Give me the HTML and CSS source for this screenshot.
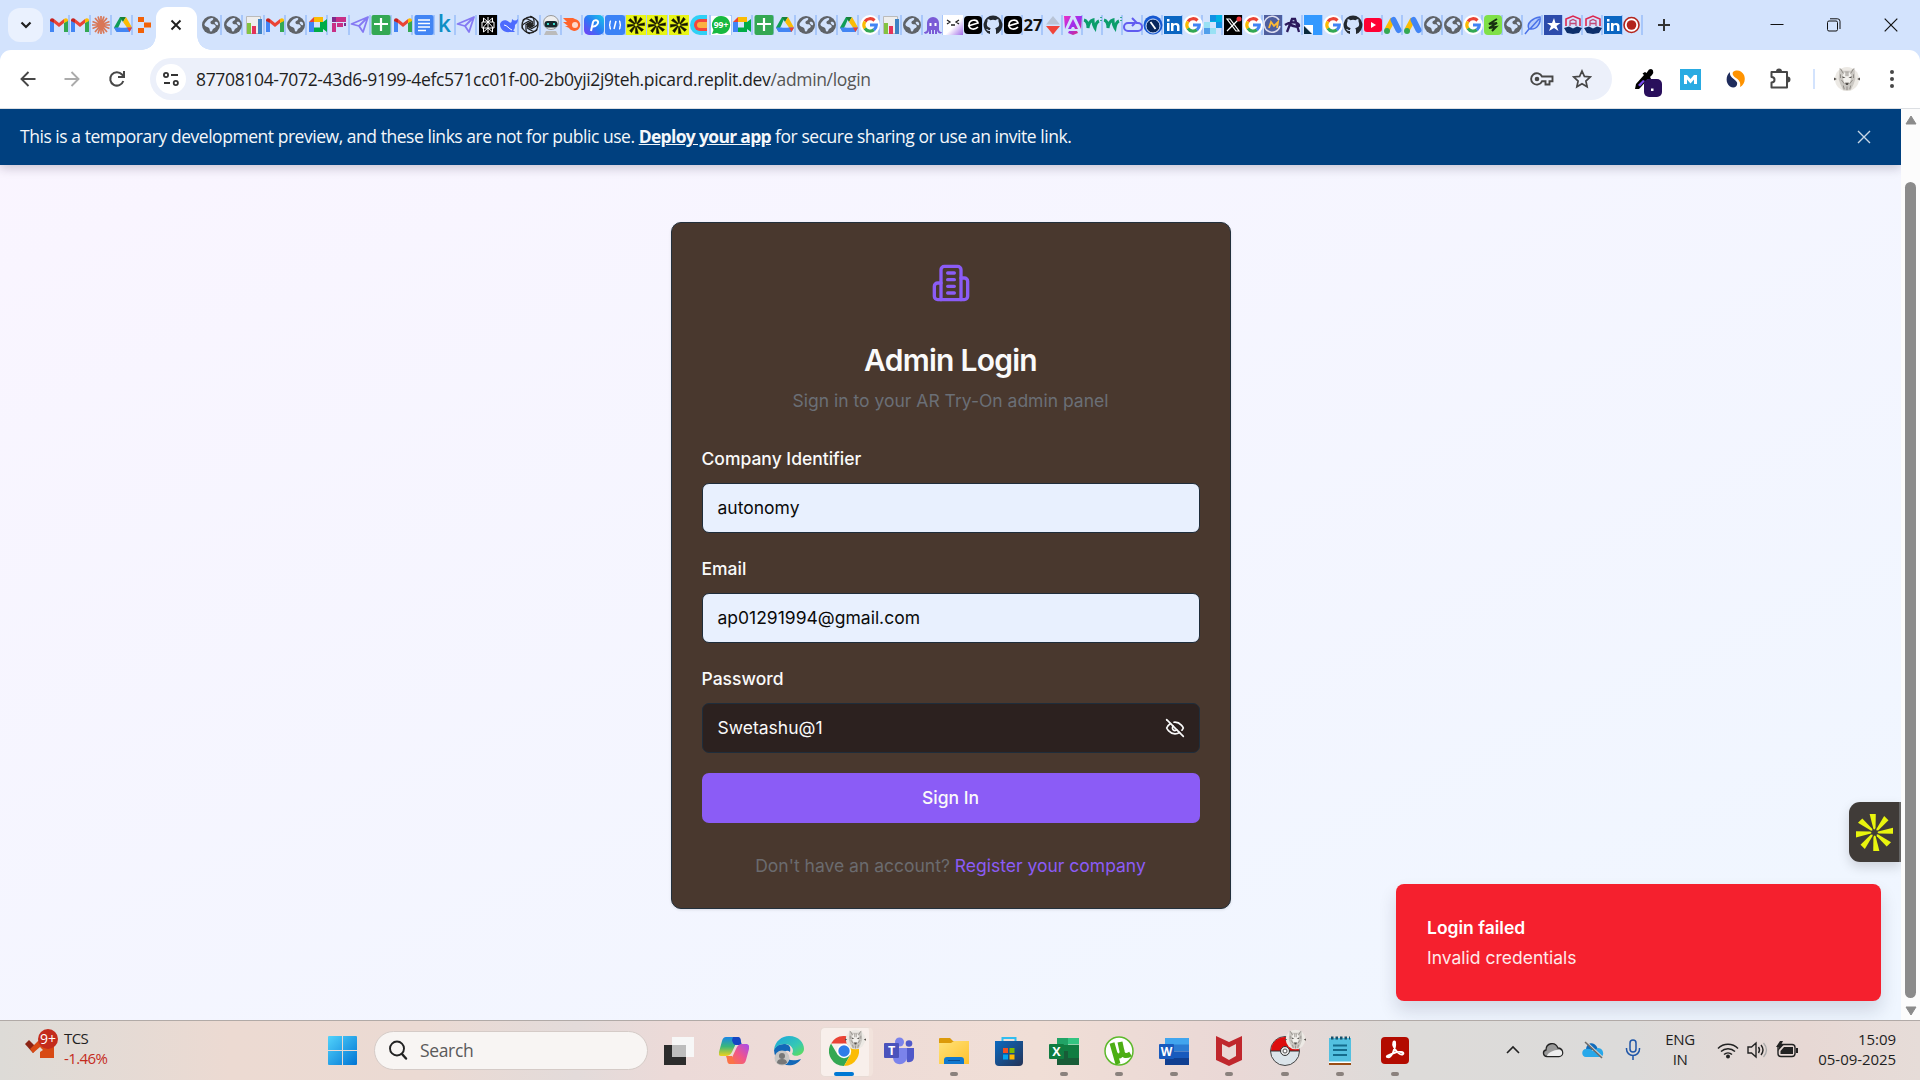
FILE: index.html
```html
<!DOCTYPE html>
<html lang="en">
<head>
<meta charset="utf-8">
<title>Admin Login</title>
<link rel="stylesheet" href="styles.css">
</head>
<body>
<svg class="defs" aria-hidden="true">
  <defs>
    <linearGradient id="gWin" x1="0" y1="0" x2="1" y2="1"><stop offset="0" stop-color="#52d3fb"/><stop offset="1" stop-color="#0074d4"/></linearGradient>
    <linearGradient id="gCopA" x1="0" y1="0" x2="0" y2="1"><stop offset="0" stop-color="#1a86e8"/><stop offset=".5" stop-color="#3bb77a"/><stop offset="1" stop-color="#f0d21c"/></linearGradient>
    <linearGradient id="gCopB" x1="0" y1="1" x2="1" y2="0"><stop offset="0" stop-color="#fb7a3c"/><stop offset=".5" stop-color="#f0568c"/><stop offset="1" stop-color="#a44bf0"/></linearGradient>
    <linearGradient id="gEdge" x1="0" y1="0" x2="1" y2="1"><stop offset="0" stop-color="#1aa5e0"/><stop offset=".6" stop-color="#35c8b4"/><stop offset="1" stop-color="#66e04b"/></linearGradient>
    <linearGradient id="gFold" x1="0" y1="0" x2="1" y2="1"><stop offset="0" stop-color="#ffe27a"/><stop offset="1" stop-color="#ffc22c"/></linearGradient>
    <linearGradient id="gStore" x1="0" y1="0" x2="1" y2="1"><stop offset="0" stop-color="#0b69c0"/><stop offset="1" stop-color="#253356"/></linearGradient>
    <linearGradient id="gP" x1="0" y1="1" x2="1" y2="0"><stop offset="0" stop-color="#7a3cf5"/><stop offset=".5" stop-color="#2a7bf5"/><stop offset="1" stop-color="#18c9e8"/></linearGradient>
    <linearGradient id="gNg" x1="0" y1="0" x2="1" y2="1"><stop offset="0" stop-color="#f02ec0"/><stop offset=".5" stop-color="#9b2ff0"/><stop offset="1" stop-color="#f5285a"/></linearGradient>
    <linearGradient id="gCat" x1="0" y1="0" x2="1" y2="1"><stop offset=".55" stop-color="#fff"/><stop offset="1" stop-color="#a06be8"/></linearGradient>
    <path id="blade" d="M15 1h6.300l-.2 14.500-1 1.500-1.200-.7z"/>
    <g id="burst"><use href="#blade"/><use href="#blade" transform="rotate(45 20 20)"/><use href="#blade" transform="rotate(90 20 20)"/><use href="#blade" transform="rotate(135 20 20)"/><use href="#blade" transform="rotate(180 20 20)"/><use href="#blade" transform="rotate(225 20 20)"/><use href="#blade" transform="rotate(270 20 20)"/><use href="#blade" transform="rotate(315 20 20)"/></g>
    <symbol id="gmail" viewBox="0 0 20 20"><path fill="#4285f4" d="M1 17V5l4 3v9z"/><path fill="#34a853" d="M15 17V8l4-3v12z"/><path fill="#ea4335" d="M5 8V4l5 4 5-4v4l-5 4z"/><path fill="#c5221f" d="M1 5.500C1 3 3.500 2.500 5 4v4L1 6z"/><path fill="#fbbc04" d="M19 5.500C19 3 16.500 2.500 15 4v4l4-2z"/></symbol>
    <symbol id="claude" viewBox="0 0 20 20"><path stroke="#d97757" stroke-width="1.700" d="M10 1v18M1 10h18M4 3l12 14M16 3L4 17M7 1.500l6 17M13 1.500l-6 17M1.500 6.500l17 7M1.500 13.500l17-7"/></symbol>
    <symbol id="drive" viewBox="0 0 20 20"><path fill="#0f9d58" d="M7 2h3l-6.500 14.500L1 12.500z"/><path fill="#188038" d="M7 2h6l-3 5z"/><path fill="#fbbc04" d="M13 2l6 10.500h-5L10 7z"/><path fill="#4285f4" d="M1 12.500h18L16.500 17h-13z"/><path fill="#ea4335" d="M14 12.500h5L16.500 17z"/><path fill="#d3e3fd" d="M10 7.500l3 5H7z"/></symbol>
    <symbol id="replit" viewBox="0 0 20 20"><path fill="#f26207" d="M4 2h6v5H4zM10 7.500h7v5h-7zM4 13h6v5H4z"/></symbol>
    <symbol id="globe" viewBox="0 0 20 20"><circle cx="10" cy="10" r="9" fill="#5f6368"/><path fill="#d3e3fd" d="M10.500 3c2.500-.3 2 1.200 1 2.200S9 6 9.500 8s4 .5 5 2.500-1.500 2.500-2.500 3.500-.5 2.500-2 2.500-1-2.500-2-3.500-4-1.500-4.500-3S7 3.500 10.500 3zM14 7c1-.5 2.500 0 3 1.200s0 2.300-1 2-3-2.500-2-3.200z"/></symbol>
    <symbol id="bars" viewBox="0 0 20 20"><path fill="#eee" stroke="#bbb" d="M2.500 1.500h14v17h-14z"/><path fill="#83c341" d="M3 8h4v11H3z"/><path fill="#e4335a" d="M8 11h4v8H8z"/><path fill="#3d82c4" d="M14 4h4v15h-4z"/></symbol>
    <symbol id="meet" viewBox="0 0 20 20"><path fill="#fbbc04" d="M6 2h9v5H6z"/><path fill="#ea4335" d="M1 7l5-5v5z"/><path fill="#4285f4" d="M1 7h5v10H1z"/><path fill="#00ac47" d="M6 12.500h6V7h3l4-3v13l-4-3v3H6z"/></symbol>
    <symbol id="figF" viewBox="0 0 20 20"><path fill="#c82f86" d="M3 2h14v5H3zM3 8h4v9H3zM8 8h6v4H8z"/><path fill="#7d2a8c" d="M3 2h4v5H3zM15 8h2v3h-2z"/></symbol>
    <symbol id="send" viewBox="0 0 20 20"><path fill="none" stroke="#8579f3" stroke-width="1.800" stroke-linejoin="round" d="M1.500 9L18 2l-5 15-4-6zM9 11l8-8"/></symbol>
    <symbol id="sheets" viewBox="0 0 20 20"><rect width="19" height="20" x=".5" rx="2" fill="#34a853"/><path stroke="#fff" stroke-width="2.200" d="M10 3v13M3 9h14"/></symbol>
    <symbol id="docs" viewBox="0 0 20 20"><rect width="19" height="20" x=".5" rx="2" fill="#4285f4"/><path stroke="#fff" stroke-width="1.700" d="M4 5h12M4 8.500h12M4 12h12M4 15.500h8"/></symbol>
    <symbol id="perp" viewBox="0 0 20 20"><path d="M1 0h18v20H1z"/><path fill="none" stroke="#fff" d="M10 2v16M4 7h12v6H4zM5.500 3L10 7l4.500-4v4M5.500 7V3M5.500 17v-5L10 7l4.500 5v5L10 13z"/></symbol>
    <symbol id="whale" viewBox="0 0 20 20"><path fill="#4d6bfe" d="M1 9c1-4 6-5 9-2 2 2 3 0 3-3 2 2 4 2 6 0 0 4-2 5-3 6 0 4-1 5-2 5l2 2-5 0C5 18 1 14 1 9z"/><path stroke="#fff" fill="none" d="M5 10c3 0 5 4 8 5"/></symbol>
    <symbol id="openai" viewBox="0 0 20 20"><g fill="none" stroke="#222" stroke-width="1.300"><path id="petal" d="M10 1.500a4 4 0 0 1 4 4v4.800l-4 2.300V7.500"/><use href="#petal" transform="rotate(60 10 10)"/><use href="#petal" transform="rotate(120 10 10)"/><use href="#petal" transform="rotate(180 10 10)"/><use href="#petal" transform="rotate(240 10 10)"/><use href="#petal" transform="rotate(300 10 10)"/><circle cx="10" cy="10" r="8"/></g></symbol>
    <symbol id="robot" viewBox="0 0 20 20"><ellipse cx="10" cy="7.500" rx="7.500" ry="7" fill="#eee" stroke="#999"/><rect x="3.500" y="6" width="13" height="6.500" rx="3" fill="#17282c"/><path fill="#39d8c8" d="M6 8h2v2H6zM12 8h2v2h-2z"/><path fill="#bbb" d="M5 16h10l2 4H3z"/></symbol>
    <symbol id="semrush" viewBox="0 0 20 20"><path fill="#ff642d" d="M1 3h10l2 1a6 6 0 1 1-6 9l-4-2 3 0-5-4h4z"/><circle cx="13" cy="10" r="3" fill="#ffd9cc"/></symbol>
    <symbol id="pp" viewBox="0 0 20 20"><rect width="20" height="20" rx="5" fill="url(#gP)"/><path fill="none" stroke="#fff" stroke-width="2" d="M7 16l2-9c1-3 6-2 5 1s-4 4-6 3"/></symbol>
    <symbol id="code" viewBox="0 0 20 20"><rect width="20" height="20" rx="3" fill="#3b82f6"/><path fill="none" stroke="#fff" stroke-width="1.500" d="M6 6c-2 0 0 4-2 4 2 0 0 4 2 4M14 6c2 0 0 4 2 4-2 0 0 4-2 4M11 6l-2 8"/></symbol>
    <symbol id="rays" viewBox="0 0 40 40"><use href="#burst"/></symbol>
    <symbol id="yray" viewBox="0 0 20 20"><path fill="#e8f516" d="M0 0h20v20H0z"/><g transform="translate(1 1) scale(.45)" fill="#151500" stroke="#151500"><use href="#burst"/></g></symbol>
    <symbol id="cc" viewBox="0 0 20 20"><path fill="#2fd0f5" d="M10 0h7v20h-7A10 10 0 0 1 10 0z"/><path fill="#f4453c" d="M10 4h7v12h-7a6 6 0 0 1 0-12z"/><path fill="#fbb040" d="M10 7h7v6h-7a3 3 0 0 1 0-6z"/></symbol>
    <symbol id="wa" viewBox="0 0 20 20"><path fill="#fff" d="M0 1h20v19H0z"/><path fill="#17b93f" d="M10 1a9 9 0 1 1-4 17l-5 1 1.500-4A9 9 0 0 1 10 1z"/><text x="10" y="13" font-size="8.500" font-weight="700" text-anchor="middle" fill="#fff">99+</text></symbol>
    <symbol id="google" viewBox="0 0 20 20"><circle cx="10" cy="10" r="10" fill="#fff"/><g fill="none" stroke-width="3.200"><path stroke="#ea4335" d="M5 6.500A6.200 6.200 0 0 1 14.500 5.500"/><path stroke="#fbbc04" d="M4.900 13.500a6.500 6.500 0 0 1 0-7"/><path stroke="#34a853" d="M4.900 13.300a6.200 6.200 0 0 0 9 1.500"/><path stroke="#4285f4" d="M10 10h6.300q0 3-2.500 5"/></g></symbol>
    <symbol id="octo" viewBox="0 0 20 20"><path fill="#7a5bd6" d="M4 8a6 6 0 0 1 12 0v6c0 3 2 3 3 3-1 3-5 1-5-2v4h-2v-4h-1v4H9v-4H8v4H6v-4c0 4-5 5-5 2 1 0 3 0 3-3z"/><path fill="#fff" d="M6.500 8h2v3h-2zM11.500 8h2v3h-2z"/></symbol>
    <symbol id="cat" viewBox="0 0 20 20"><path fill="url(#gCat)" d="M0 0h20v20H0z"/><path fill="none" stroke="#222" stroke-width="1.300" d="M4 5l3 2-3 2M16 5l-3 2 3 2M8 10h4"/></symbol>
    <symbol id="ee" viewBox="0 0 20 20"><rect x="1" y="1" width="18" height="18" rx="4"/><path fill="none" stroke="#fff" stroke-width="1.700" d="M5 11l10-3c-1-4-9-4-9 2 0 5 6 5 9 2"/></symbol>
    <symbol id="github" viewBox="0 0 20 20"><path fill="#24292f" d="M10 .5a9.500 9.500 0 0 0-3 18.500v-3c-3 .5-3-1.500-4-2 2-.5 2 1.500 4 1 0-1 .4-1.500.8-1.800C4 12.500 3 10 4.500 6.500c0-1 0-2 .3-2.500 1 0 2 .8 2.500 1.200q2.700-.7 5.400 0C13.200 4.800 14.200 4 15.200 4c.3.500.3 1.500.3 2.500C17 10 16 12.500 12.200 13.200c.6.600.8 1.300.8 2.300V19A9.500 9.500 0 0 0 10 .5z"/></symbol>
    <symbol id="n27" viewBox="0 0 20 20"><text x="10" y="15.500" font-size="16" font-weight="700" textLength="19" lengthAdjust="spacingAndGlyphs" text-anchor="middle" fill="#111">27</text></symbol>
    <symbol id="diam" viewBox="0 0 20 20"><path fill="#b9c4d6" d="M10 1l7 8.500H3z"/><path fill="#f0443a" d="M3 11h14l-7 8.500z"/></symbol>
    <symbol id="angular" viewBox="0 0 20 20"><path fill="url(#gNg)" d="M1 1h7L2 14zM12 1h7l-1 13zM10 4l5 10h-3l-1-2H9l-1 2H5zM6 16h8l1 2-5 2-5-2z"/></symbol>
    <symbol id="ww" viewBox="0 0 20 20"><path fill="none" stroke="#0c9d6c" stroke-width="3" d="M1 5q4 1 4 8 1-7 5-8 0 5 2 8 1-6 4-7"/><path stroke="#0c9d6c" stroke-width="1.500" d="M18 2v1M18 5v1"/></symbol>
    <symbol id="loop" viewBox="0 0 20 20"><path fill="none" stroke="#615cf0" stroke-width="2" d="M13 8h2a4 4 0 0 1 0 8H5a4 4 0 0 1 0-8h7M9 3l4 4-4 4"/></symbol>
    <symbol id="nn" viewBox="0 0 20 20"><circle cx="10" cy="10" r="9.500" fill="#1658d1"/><circle cx="10" cy="11" r="7" fill="#08275d" stroke="#d3e3fd"/><path stroke="#fff" stroke-width="1.800" d="M7.500 7l5 7"/></symbol>
    <symbol id="linkedin" viewBox="0 0 20 20"><path fill="#0a66c2" d="M1 1h18v18H1z"/><path fill="#fff" d="M4 8h2.500v8H4zM4 4h2.500v2.500H4zM8 8h2.500v1c2-2 6-1 6 2v5H14v-4.500c0-2-3.500-2-3.500 0V16H8z"/></symbol>
    <symbol id="sg" viewBox="0 0 20 20"><path fill="#00b2e3" d="M7 0h12v13h-6V7H7z"/><path fill="#1a82e2" d="M13 7h6v6h-6zM1 13h6v6H1zM7 0h6v6H7z" opacity=".7"/><path fill="#99e1f4" d="M1 7h6v6H1zM7 13h6v6H7z"/></symbol>
    <symbol id="xx" viewBox="0 0 20 20"><path d="M1 0h18v20H1z"/><path fill="none" stroke="#fff" stroke-width="1.200" d="M4 4h3l9 12h-3zM16 4L4 16"/><circle cx="16" cy="4" r="2.500" fill="#f3353a"/></symbol>
    <symbol id="mm" viewBox="0 0 20 20"><path fill="#4e5e9e" d="M1 0h18v20H1z"/><path fill="none" stroke="#dde" stroke-width="1.500" d="M16 5a8 8 0 1 0 1 6"/><path fill="none" stroke="#fdb933" stroke-width="1.800" d="M6 13l2-6 3 4 4-4-1 6"/></symbol>
    <symbol id="aa" viewBox="0 0 20 20"><path fill="none" stroke="#2c1a5c" stroke-width="2.300" d="M4 17L9 4h3l4 13M2 10c5-4 13-3 14 0s-6 2-11-2"/></symbol>
    <symbol id="bs" viewBox="0 0 20 20"><path fill="#3399ff" d="M1 0h18v20h-9V10H1z"/><path fill="#fff" d="M1 10h9v9z"/><path fill="#0a2a3c" d="M1 11l8 8H1z"/></symbol>
    <symbol id="yt" viewBox="0 0 20 20"><rect x="1" y="3" width="18" height="14" rx="3" fill="#f03"/><path fill="#fff" d="M8 7l5 3-5 3z"/></symbol>
    <symbol id="ads" viewBox="0 0 20 20"><path stroke="#fbbc04" stroke-width="5.500" d="M10 4L4 15"/><path stroke="#4285f4" stroke-width="6" stroke-linecap="round" d="M10.500 5l5 10"/><circle cx="4" cy="16" r="3" fill="#34a853"/></symbol>
    <symbol id="grn" viewBox="0 0 20 20"><rect x="1" width="18" height="20" rx="4" fill="#7fe048"/><path fill="none" stroke="#163010" stroke-width="2" d="M14 4l-8 5 8-1-8 5 7-1-4 4"/></symbol>
    <symbol id="feather" viewBox="0 0 20 20"><path fill="#b7cdfb" stroke="#4a72e8" stroke-width="1.500" d="M2 19L6 14C3 8 10 3 17 2c1 6-3 13-10 12l9-10"/></symbol>
    <symbol id="star" viewBox="0 0 20 20"><path fill="#2c4bab" d="M1 0h18v20H1z"/><path fill="#fff" d="M11 3l1.500 5 5 0-4 3 2 5-4.500-3-5 3 2-5-4-3h5z"/></symbol>
    <symbol id="crest" viewBox="0 0 20 20"><path fill="none" stroke="#dc2850" stroke-width="1.600" d="M3 11V4l7-3 7 3v7"/><path fill="none" stroke="#c04a78" stroke-width="1.300" d="M7 11V6l3-1.500L13 6v5M7 8.500h6"/><path fill="#0d2f6b" d="M1 13l5-1.500 4 2 4-2 5 1.500-3 5-6 1-6-1z"/></symbol>
    <symbol id="rec" viewBox="0 0 20 20"><circle cx="8.500" cy="10" r="7.500" fill="#fff" stroke="#b3241c" stroke-width="1.600"/><circle cx="8.500" cy="10" r="4.800" fill="#b3241c"/></symbol>
    <symbol id="wolf" viewBox="0 0 28 28"><circle cx="14" cy="14" r="13" fill="#ece9e4"/><path fill="#cbc8c3" d="M6 2l4 3h8l4-3 1 12-2 6-3 6h-8l-3-6-2-6z"/><path fill="#f3f1ed" d="M11 7h6l2 4-2 7h-6l-2-7z"/><path stroke="#8b8782" stroke-width="1" fill="none" d="M7 3l3 5M21 3l-3 5M8 15l3 4M20 15l-3 4M10 21l1 4M18 21l-1 4M14 22v4M13 6v5M15 6v5M7 9v4M21 9v4"/><path fill="#55514d" d="M8.500 11l4 1.500-3 .8zM19.500 11l-4 1.500 3 .8zM12 18h4l-1 2.500h-2z"/><path fill="#55514d" d="M0 12.500l3 1.500-3 1.500zM28 12.500L25 14l3 1.500z"/></symbol>
  </defs>
</svg>

<div class="browser">
  <div class="tabstrip">
    <button class="tab-search"><svg width="12" height="12" viewBox="0 0 12 12"><path fill="none" stroke="#1f1f1f" stroke-width="2.200" d="M1.500 3.500L6 8l4.500-4.500"/></svg></button>
    <div class="tabs wide">
      <i><svg><use href="#gmail"/></svg></i><i><svg><use href="#gmail"/></svg></i><i><svg><use href="#claude"/></svg></i><i><svg><use href="#drive"/></svg></i><i class="last"><svg><use href="#replit"/></svg></i>
    </div>
    <div class="tab-active"><svg width="12" height="12" viewBox="0 0 12 12"><path stroke="#1f1f1f" stroke-width="1.900" d="M1.500 1.500l9 9M10.500 1.500l-9 9"/></svg></div>
    <div class="tabs wide">
      <i><svg><use href="#globe"/></svg></i><i><svg><use href="#globe"/></svg></i><i><svg><use href="#bars"/></svg></i><i><svg><use href="#gmail"/></svg></i><i><svg><use href="#globe"/></svg></i><i><svg><use href="#meet"/></svg></i><i><svg><use href="#figF"/></svg></i><i><svg><use href="#send"/></svg></i><i><svg><use href="#sheets"/></svg></i><i><svg><use href="#gmail"/></svg></i><i><svg><use href="#docs"/></svg></i><i><b class="fav-k">k</b></i><i><svg><use href="#send"/></svg></i><i><svg><use href="#perp"/></svg></i><i><svg><use href="#whale"/></svg></i><i><svg><use href="#openai"/></svg></i><i><svg><use href="#robot"/></svg></i><i><svg><use href="#semrush"/></svg></i><i><svg><use href="#pp"/></svg></i><i><svg><use href="#code"/></svg></i><i><svg><use href="#yray"/></svg></i><i><svg><use href="#yray"/></svg></i><i><svg><use href="#yray"/></svg></i><i><svg><use href="#cc"/></svg></i><i><svg><use href="#wa"/></svg></i><i><svg><use href="#meet"/></svg></i><i><svg><use href="#sheets"/></svg></i><i><svg><use href="#drive"/></svg></i><i><svg><use href="#globe"/></svg></i><i><svg><use href="#globe"/></svg></i><i><svg><use href="#drive"/></svg></i><i><svg><use href="#google"/></svg></i><i><svg><use href="#bars"/></svg></i><i><svg><use href="#globe"/></svg></i><i><svg><use href="#octo"/></svg></i>
    </div>
    <div class="tabs">
      <i><svg><use href="#cat"/></svg></i><i><svg><use href="#ee"/></svg></i><i><svg><use href="#github"/></svg></i><i><svg><use href="#ee"/></svg></i><i><svg><use href="#n27"/></svg></i><i><svg><use href="#diam"/></svg></i><i><svg><use href="#angular"/></svg></i><i><svg><use href="#ww"/></svg></i><i><svg><use href="#ww"/></svg></i><i><svg><use href="#loop"/></svg></i><i><svg><use href="#nn"/></svg></i><i><svg><use href="#linkedin"/></svg></i><i><svg><use href="#google"/></svg></i><i><svg><use href="#sg"/></svg></i><i><svg><use href="#xx"/></svg></i><i><svg><use href="#google"/></svg></i><i><svg><use href="#mm"/></svg></i><i><svg><use href="#aa"/></svg></i><i><svg><use href="#bs"/></svg></i><i><svg><use href="#google"/></svg></i><i><svg><use href="#github"/></svg></i><i><svg><use href="#yt"/></svg></i><i><svg><use href="#ads"/></svg></i><i><svg><use href="#ads"/></svg></i><i><svg><use href="#globe"/></svg></i><i><svg><use href="#globe"/></svg></i><i><svg><use href="#google"/></svg></i><i><svg><use href="#grn"/></svg></i><i><svg><use href="#globe"/></svg></i><i><svg><use href="#feather"/></svg></i><i><svg><use href="#star"/></svg></i><i><svg><use href="#crest"/></svg></i><i><svg><use href="#crest"/></svg></i><i><svg><use href="#linkedin"/></svg></i><i><svg><use href="#rec"/></svg></i>
    </div>
    <svg class="new-tab" width="14" height="14" viewBox="0 0 14 14"><path stroke="#333" stroke-width="2" d="M7 1v12M1 7h12"/></svg>
    <div class="window-controls">
      <span><svg width="14" height="14" viewBox="0 0 14 14"><path stroke="#111" d="M.5 6.500h13"/></svg></span>
      <span><svg width="14" height="14" viewBox="0 0 14 14"><g fill="none" stroke="#111"><rect x=".5" y="3" width="10" height="10" rx="1.500"/><path d="M3 .8h7.500a2.500 2.500 0 0 1 2.500 2.500V11"/></g></svg></span>
      <span><svg width="14" height="14" viewBox="0 0 14 14"><path stroke="#111" stroke-width="1.200" d="M.7.700l12.600 12.600M13.300.7L.7 13.300"/></svg></span>
    </div>
  </div>

  <div class="toolbar">
    <div class="nav">
      <span><svg width="16" height="16" viewBox="0 0 16 16"><path fill="none" stroke="#474747" stroke-width="1.900" d="M15.500 8H2M8.500 1L1.500 8l7 7"/></svg></span>
      <span><svg width="16" height="16" viewBox="0 0 16 16"><path fill="none" stroke="#ababab" stroke-width="1.900" d="M.5 8H14M7.500 1l7 7-7 7"/></svg></span>
      <span><svg width="18" height="18" viewBox="0 0 18 18"><path fill="none" stroke="#474747" stroke-width="2" d="M15.300 11A6.700 6.700 0 1 1 14 4.500l2 2.200M16 1v6h-6"/></svg></span>
    </div>
    <div class="omnibox">
      <div class="site"><svg width="16" height="14" viewBox="0 0 16 14"><g fill="none" stroke="#333" stroke-width="1.800"><circle cx="3" cy="3" r="2.100"/><path d="M8 3h7M1 11h6"/><circle cx="12.800" cy="11" r="2.100"/></g></svg></div>
      <div class="url">87708104-7072-43d6-9199-4efc571cc01f-00-2b0yji2j9teh.picard.replit.dev<span>/admin/login</span></div>
      <div class="omni-icons">
        <svg width="24" height="16" viewBox="0 0 24 16"><g fill="none" stroke="#474747" stroke-width="1.900"><path d="M12 5.500a5.700 5.700 0 1 0 0 4.800h3.500v3.200h4v-3.200H22.500V5.500z"/></g><circle cx="7" cy="8" r="2.300" fill="#474747"/></svg>
        <svg width="20" height="20" viewBox="0 0 20 20"><path fill="none" stroke="#474747" stroke-width="1.700" d="M10 2l2.400 5.400 5.900.6-4.400 4 1.200 5.800L10 14.800l-5.100 3 1.200-5.800-4.400-4 5.900-.6z"/></svg>
      </div>
    </div>
    <div class="ext">
      <span><svg class="dropper" width="28" height="30" viewBox="0 0 28 30"><path d="M1 21l1-5 8-9-1.500-1.500L11 4l1.500 1L15 1.500q3-1.500 4 1T18 7l-2 2 1 1.500-1.500 1.500-1.500-1-7 8-2 2z"/><path fill="#7a4cf0" d="M4 17l5-5 2 1-5 5.500z"/><rect x="10" y="11" width="18" height="18" rx="5" fill="#290f5c"/><path fill="#fff" d="M17 20.500h2.500V23H17z"/></svg></span>
      <span><svg width="21" height="21" viewBox="0 0 21 21"><path fill="#29abe2" d="M0 0h21v21H0z"/><path fill="#fff" d="M4 15V6h3l3.500 4L14 6h3v9h-3v-4.500l-3.500 4-3.500-4V15z"/></svg></span>
      <span><svg width="19" height="19" viewBox="0 0 19 19"><path fill="#1f2c5c" d="M4 2C0 5-1 13 4 16.500c4 2.500 8 0 7-4C10 9 3 8 4 2z"/><path fill="#ff9300" d="M7 2c4-3 9-1 11 3 2 5 0 10-4 12 1-5-1-7-4-9S6 4 7 2z"/></svg></span>
      <span><svg width="22" height="22" viewBox="0 0 22 22"><path fill="none" stroke="#474747" stroke-width="2" stroke-linejoin="round" d="M2.500 4H18v15.500H2.500v-5c4 0 4-5.500 0-5.500z"/><path fill="#474747" d="M7 3.500a3 3 0 0 1 6 0zM18.500 8.500a3 3 0 0 1 0 6z"/></svg></span>
      <em></em>
      <span><svg width="26" height="26"><use href="#wolf"/></svg></span>
      <span><svg width="4" height="18" viewBox="0 0 4 18"><g fill="#474747"><circle cx="2" cy="2" r="2"/><circle cx="2" cy="9" r="2"/><circle cx="2" cy="16" r="2"/></g></svg></span>
    </div>
  </div>

  <div class="viewport">
    <main class="page">
      <div class="banner">
        <p>This is a temporary development preview, and these links are not for public use. <a>Deploy your app</a> for secure sharing or use an invite link.</p>
        <svg width="14" height="14" viewBox="0 0 14 14"><path stroke="#c9d7e6" stroke-width="1.400" d="M1 1l12 12M13 1L1 13"/></svg>
      </div>
      <section class="card">
        <svg class="building" width="40" height="40" viewBox="0 0 24 24"><path d="M6 22V4a2 2 0 0 1 2-2h8a2 2 0 0 1 2 2v18Z"/><path d="M6 12H4a2 2 0 0 0-2 2v6a2 2 0 0 0 2 2h2"/><path d="M18 9h2a2 2 0 0 1 2 2v9a2 2 0 0 1-2 2h-2"/><path d="M10 6h4M10 10h4M10 14h4M10 18h4"/></svg>
        <h1>Admin Login</h1>
        <p class="sub">Sign in to your AR Try-On admin panel</p>
        <label>Company Identifier</label>
        <div class="field">autonomy</div>
        <label>Email</label>
        <div class="field">ap01291994@gmail.com</div>
        <label>Password</label>
        <div class="field dark">Swetashu@1
          <svg width="20" height="20" viewBox="0 0 24 24"><path d="M9.880 9.880a3 3 0 1 0 4.240 4.240"/><path d="M10.730 5.080A10.430 10.430 0 0 1 12 5c7 0 10 7 10 7a13.160 13.160 0 0 1-1.670 2.680"/><path d="M6.610 6.610A13.526 13.526 0 0 0 2 12s3 7 10 7a9.740 9.740 0 0 0 5.390-1.610"/><path d="M2 2l20 20"/></svg>
        </div>
        <div class="submit">Sign In</div>
        <p class="register">Don't have an account? <a>Register your company</a></p>
      </section>
      <div class="side-widget"><svg width="39" height="39"><use href="#rays"/></svg></div>
      <div class="toast"><strong>Login failed</strong><span>Invalid credentials</span></div>
    </main>
    <div class="scrollbar">
      <svg width="12" height="10" viewBox="0 0 12 10"><path fill="#8b8b8b" stroke="#8b8b8b" stroke-linejoin="round" d="M6 1l5 8H1z"/></svg>
      <div class="thumb"></div>
      <svg width="12" height="10" viewBox="0 0 12 10"><path fill="#8b8b8b" stroke="#8b8b8b" stroke-linejoin="round" d="M6 9L1 1h10z"/></svg>
    </div>
  </div>
</div>

<div class="taskbar">
  <div class="widgets">
    <svg width="36" height="32" viewBox="0 0 36 32"><path fill="#8c2415" d="M1 16l4-4 8 8-4 5z"/><path fill="#d84a14" d="M9 25l-3-4 9-9h15v18H16v-6l3-2-3-3z"/><circle cx="24" cy="11" r="10" fill="#c42b1c"/><text x="24" y="16" font-size="14" text-anchor="middle" fill="#fff">9+</text></svg>
    <div class="stock"><span>TCS</span><span class="down">-1.46%</span></div>
  </div>
  <svg class="start" width="29" height="29" viewBox="0 0 29 29"><path fill="url(#gWin)" d="M1 0h13v14H0V1q0-1 1-1zM15 0h13q1 0 1 1v13H15zM0 15h14v14H1q-1 0-1-1zM15 15h14v13q0 1-1 1H15z"/></svg>
  <div class="search"><svg width="20" height="20" viewBox="0 0 20 20"><circle cx="9" cy="8.500" r="7" fill="none" stroke="#222" stroke-width="1.900"/><path stroke="#222" stroke-width="2.400" stroke-linecap="round" d="M14 14l4 4.500"/></svg>Search</div>
  <div class="apps">
    <div class="app"><svg viewBox="0 0 30 30"><path fill="#2c2c2c" d="M0 9h22v20H0z"/><path fill="#f7f7f7" d="M8 1h22v20H8z"/><path fill="#bdbdbd" d="M8 9h14v12H8z"/></svg></div>
    <div class="app"><svg viewBox="0 0 30 30"><path fill="url(#gCopA)" d="M7 1h13l-7 15q-2 4-6 4H2q-3 0-2-4L3 5q1-4 4-4z"/><path fill="#1545c2" d="M14 1h5q3 0 3 5l1 3h-6q-3 0-4-5z"/><path fill="url(#gCopB)" d="M23 28H10l7-15q2-5 6-5h5q3 1 2 5l-3 11q-1 4-4 4z"/><path fill="#fb7347" d="M7 20h6l3 8h-5q-3 0-3-5z"/></svg></div>
    <div class="app"><svg viewBox="0 0 30 30"><path fill="#1268b8" d="M0 14Q2 8 10 8c6 0 7 4 6 8-3-3-8 0-6 4 3 5 11 5 17 3-6 10-26 9-27-9z"/><path fill="url(#gEdge)" d="M0 14C1 5 8 0 15 0c10 0 15 7 15 13 0 6-9 9-12 5 3-5-1-10-8-10Q3 8 0 14z"/><circle cx="8" cy="22" r="7.500" fill="#c8c6c4"/><circle cx="8" cy="20" r="3" fill="#777"/><path fill="#777" d="M3 27q0-4 5-4t5 4q-5 3-10 0z"/></svg></div>
    <div class="app active"><svg viewBox="0 0 30 30"><path fill="#ea4335" d="M2 7.500a15 15 0 0 1 26 0H15z"/><path fill="#34a853" d="M2 7.500a15 15 0 0 0 13 22.500l6.500-11.500h-13z"/><path fill="#fbbc04" d="M28 7.500A15 15 0 0 1 15 30l6.500-11.300L18 7.500z"/><circle cx="15" cy="15" r="7.200" fill="#fff"/><circle cx="15" cy="15" r="5.700" fill="#2f7de9"/></svg><svg class="badge"><use href="#wolf"/></svg><u></u></div>
    <div class="app"><svg viewBox="0 0 30 30"><circle cx="15.500" cy="6" r="4.500" fill="#7b83eb"/><circle cx="25" cy="7.500" r="3.300" fill="#5059c9"/><path fill="#5059c9" d="M21 12h9v9q0 6-7 5z"/><path fill="#7b83eb" d="M9 12h14v9c0 9-14 10-14 0z"/><rect y="7" width="15" height="15" rx="1" fill="#4b53bc"/><text x="7.500" y="19" font-size="12.500" font-weight="700" text-anchor="middle" fill="#fff">T</text></svg></div>
    <div class="app"><svg viewBox="0 0 30 30"><path fill="#dc9a0a" d="M0 3q0-1 1-1h10l3 3h8v5H0z"/><path fill="url(#gFold)" d="M0 7h12l3-2h15v23H0z"/><path fill="#1078cf" d="M5 28v-4q0-3 3-3h14q3 0 3 3v4z"/><path stroke="#094e94" d="M9 24.500h12"/></svg><u></u></div>
    <div class="app"><svg viewBox="0 0 30 30"><path fill="none" stroke="#31bdf0" stroke-width="2" d="M8.500 7V2h13v5"/><path fill="url(#gStore)" d="M1 5h28v21q0 4-4 4H5q-4 0-4-4z"/><path fill="#f25022" d="M9 12h5v5H9z"/><path fill="#7fba00" d="M15.500 12h5v5h-5z"/><path fill="#00a4ef" d="M9 18.500h5v5H9z"/><path fill="#ffb900" d="M15.500 18.500h5v5h-5z"/></svg></div>
    <div class="app"><svg viewBox="0 0 30 30"><path fill="#21a366" d="M8 2h11v8H8z"/><path fill="#33c481" d="M19 2h11v6.500H19z"/><path fill="#107c41" d="M8 9h22v13H8z"/><path fill="#185c37" d="M8 15h11v14H8zM19 22h11v7H19z"/><rect y="8" width="15" height="15" rx="1" fill="#107c41"/><text x="7.500" y="20" font-size="12.500" font-weight="700" text-anchor="middle" fill="#fff">X</text></svg><u></u></div>
    <div class="app"><svg viewBox="0 0 30 30"><circle cx="15" cy="15" r="14" fill="#fff" stroke="#5db92b" stroke-width="1.500"/><path fill="none" stroke="#4cae14" stroke-width="5" d="M8 7l6 21M11.500 18c4 5 8 0 6-5L16 6M17.500 13c1 7 4 8 9 5"/></svg><u></u></div>
    <div class="app"><svg viewBox="0 0 30 30"><path fill="#41a5ee" d="M6 2h24v7H6z"/><path fill="#2b7cd3" d="M6 8.500h24v7H6z"/><path fill="#185abd" d="M6 15.500h24v7H6z"/><path fill="#103f91" d="M6 22h24v7H6z"/><rect y="8" width="15" height="15" rx="1" fill="#185abd"/><text x="7.500" y="20" font-size="12" font-weight="700" text-anchor="middle" fill="#fff">W</text></svg><u></u></div>
    <div class="app"><svg viewBox="0 0 30 30"><path fill="#c0272d" d="M2 0l13 6 13-6v24l-13 6-13-6zM8 8v12l7 4 7-4V8l-7 3.500z" fill-rule="evenodd"/></svg><u></u></div>
    <div class="app"><svg viewBox="0 0 30 30"><circle cx="15" cy="15" r="14.500" fill="#dbe4ea" stroke="#444"/><path fill="#dd0d0d" d="M1 15a14 14 0 0 1 28 0z"/><path stroke="#333" d="M1 15h28"/><circle cx="15" cy="15" r="4.500" fill="#e5e5e5" stroke="#333"/><circle cx="15" cy="15" r="2" fill="#fff" stroke="#555"/></svg><svg class="badge"><use href="#wolf"/></svg><u></u></div>
    <div class="app"><svg viewBox="0 0 30 30"><path fill="#53c0e0" d="M4 2h22v25H4z"/><path fill="#9a4d14" d="M4 27h22v2H4z"/><path fill="#fff" d="M4 25.500h22V27H4z"/><path stroke="#146b8c" stroke-width="1.800" d="M8 9.500h14M8 14h14M8 19h14"/><path stroke="#17516b" stroke-width="3" stroke-dasharray="2.500 2" d="M6 2h19"/></svg><u></u></div>
    <div class="app"><svg viewBox="0 0 30 30"><rect x="1" y="1" width="28" height="27" rx="4" fill="#b30b00"/><path fill="none" stroke="#fff" stroke-width="1.900" d="M7 21c4 2 9-8 8-15-1-2-3 1-1 5 2 5 7 9 9 7s-4-3-9-1-8 3-7 4z"/></svg><u></u></div>
  </div>
  <div class="tray">
    <span><svg width="14" height="10" viewBox="0 0 14 10"><path fill="none" stroke="#222" stroke-width="1.600" d="M1 8l6-6 6 6"/></svg></span>
    <span><svg width="22" height="16" viewBox="0 0 22 16"><path fill="#999" stroke="#222" stroke-width="1.300" d="M5 14.500C1 14.500 0 9 4 8c0-7 9-9 12-2 5 0 7 8 1 8.500z"/><path fill="#eee" d="M5 14c0-3 9-7 13-6 3 1 3 6-1 6z"/></svg></span>
    <span><svg width="22" height="18" viewBox="0 0 22 18"><path fill="#0f6cbd" d="M4 9C4 1 12 0 15 6l1 3z"/><path fill="#28a8ea" d="M4 16C-1 16-1 8 4 8q4-1 7 2l5-3c6 0 7 9 2 9z"/><path stroke="#d8d4d0" stroke-width="1.200" d="M4 .5l17 16"/><path stroke="#6f6b68" stroke-width="1.500" d="M3 1l17 16"/></svg></span>
    <span><svg width="16" height="22" viewBox="0 0 16 22"><g fill="none" stroke="#1f56a8" stroke-width="1.500"><rect x="5" y="1" width="6" height="12" rx="3"/><path d="M1.500 9v1a6.500 6.500 0 0 0 13 0V9M8 17v4"/></g></svg></span>
    <div class="lang"><b>ENG</b><b>IN</b></div>
    <div class="status">
      <svg width="22" height="18" viewBox="0 0 22 18"><g fill="none" stroke="#222" stroke-width="1.500"><path d="M1 7.500a14 14 0 0 1 20 0M4 10.500a10 10 0 0 1 14 0M7 13.500a6 6 0 0 1 8 0"/></g><circle cx="11" cy="15.500" r="2" fill="#222"/></svg>
      <svg width="21" height="18" viewBox="0 0 21 18"><path fill="none" stroke="#222" stroke-width="1.400" d="M1 6h3.500L9 2v14l-4.500-4H1zM11.500 6q2 3 0 6M14 4q4 5 0 10"/><path fill="none" stroke="#aaa" stroke-width="1.300" d="M16.500 2q6 7 0 14"/></svg>
      <svg width="22" height="17" viewBox="0 0 22 17"><rect x="2" y="3.500" width="17" height="12" rx="3" fill="none" stroke="#222" stroke-width="1.400"/><path fill="#222" d="M8 6h9v7H4.500v-3zM20 7h2v5h-2zM4 0L0 6h3L1.500 10.500 7.500 4H5l2-4z"/></svg>
    </div>
    <div class="clock"><b>15:09</b><b>05-09-2025</b></div>
  </div>
</div>
</body>
</html>
```
FILE: styles.css
```css
* { box-sizing: border-box; }
body { margin: 0; width: 1920px; height: 1080px; overflow: hidden; display: flex; flex-direction: column; font-family: "Open Sans", "Noto Sans", sans-serif; background: #d3e3fd; }
svg { display: block; flex: none; }
p, h1 { margin: 0; }
.defs { position: absolute; width: 0; height: 0; }
.browser { display: flex; flex-direction: column; height: 1020px; }

.tabstrip { display: flex; height: 50px; padding-left: 8px; }
.tab-search { width: 35px; height: 34px; margin: 8px 4.500px 0 0; padding: 0; border: 0; border-radius: 12px; background: #eaf1fe; display: flex; align-items: center; justify-content: center; }
.tabs { display: flex; align-items: center; }
.tabs i { width: 20px; height: 20px; border-right: 2px solid #a8c7fa; font-style: normal; display: flex; }
.tabs.wide { margin: 0 -1px 0 1px; }
.tabs.wide i { width: 21.240px; padding-left: .5px; }
.tabs i.last { border-color: transparent; }
.tabs svg { width: 20px; height: 20px; }
.fav-k { width: 20px; text-align: center; font: 600 23px/17px "Open Sans", sans-serif; color: #0f8fc4; }
.tab-active { position: relative; width: 41px; height: 43px; margin: 7px 3px 0 2.300px; border-radius: 11px 11px 0 0; background: #fff; display: flex; justify-content: center; padding-top: 12px; }
.tab-active::before, .tab-active::after { content: ""; position: absolute; bottom: 0; width: 14px; height: 14px; }
.tab-active::before { left: -14px; background: radial-gradient(circle at 0 0, transparent 13.500px, #fff 14px); }
.tab-active::after { right: -14px; background: radial-gradient(circle at 100% 0, transparent 13.500px, #fff 14px); }
.new-tab { margin: 18px 0 0 14px; }
.window-controls { display: flex; margin-left: auto; padding-right: 1px; height: 50px; }
.window-controls span { width: 57px; display: flex; align-items: center; justify-content: center; }

.toolbar { display: flex; align-items: center; height: 59px; background: #fff; border-bottom: 1px solid #dcdfe3; border-radius: 11px 11px 0 0; }
.nav { display: flex; width: 150px; padding-left: 5.500px; }
.nav span { width: 44.500px; height: 20px; display: flex; align-items: center; justify-content: center; }
.omnibox { display: flex; align-items: center; width: 1462px; height: 42px; border-radius: 21px; background: #ecf0fa; padding: 0 20px 0 6px; }
.site { width: 30px; height: 30px; margin-right: 10px; border-radius: 50%; background: #fff; display: flex; align-items: center; justify-content: center; }
.url { font-size: 17.500px; letter-spacing: -.335px; color: #1f1f1f; white-space: nowrap; }
.url span { color: #555; }
.omni-icons { display: flex; gap: 18px; align-items: center; margin-left: auto; }
.ext { display: flex; align-items: center; padding-left: 10.500px; }
.ext span { width: 45px; height: 30px; display: flex; align-items: center; justify-content: center; }
.ext .dropper { margin: 7px 0 0 6px; }
.ext em { width: 2px; height: 20px; margin: 0 10px; background: #d3e3fd; }

.viewport { display: flex; height: 911px; }
.page { position: relative; width: 1901px; overflow: hidden; background: linear-gradient(to bottom right, #faf5ff, #eff6ff); font-family: Inter, sans-serif; font-size: 17.500px; }
.banner { display: flex; align-items: center; justify-content: space-between; height: 56px; padding: 0 30px 0 20px; background: #00407f; box-shadow: 0 3px 10px rgba(30, 20, 50, .22); color: #f4f7fa; font: 17.500px "Open Sans", sans-serif; letter-spacing: -.460px; white-space: nowrap; }
.banner p { margin-top: -2px; }
.banner a { font-weight: 700; letter-spacing: -.680px; text-decoration: underline; }
.card { display: flex; flex-direction: column; width: 560px; height: 687px; margin: 57px auto 0; padding: 40px 30px 0; border: 1px solid #23303c; border-radius: 10px; background: #49382e; color: #fafafa; box-shadow: 0 1px 3px rgba(0, 0, 0, .1); }
.building { align-self: center; fill: none; stroke: #8b5cf6; stroke-width: 2; stroke-linecap: round; stroke-linejoin: round; }
h1 { margin-top: 37px; text-align: center; font-size: 30px; line-height: 40px; font-weight: 600; letter-spacing: -.750px; }
.sub { margin: 8px 0 33px; text-align: center; line-height: 25px; color: #6b6f76; }
label { height: 37px; line-height: 25px; font-weight: 500; }
.field { position: relative; display: flex; align-items: center; height: 50px; margin-bottom: 23px; padding: 0 14px 2px 15px; border: 1px solid #1f2d3b; border-radius: 7px; background: #e8f0fe; color: #0a0a0a; }
.field.dark { justify-content: space-between; margin-bottom: 20px; background: #2c211f; color: #fafafa; }
.field svg { margin-top: 2px; fill: none; stroke: #fafafa; stroke-width: 2; stroke-linecap: round; stroke-linejoin: round; }
.submit { height: 50px; line-height: 50px; border-radius: 7px; background: #8b5cf6; text-align: center; font-weight: 500; }
.register { margin-top: 30px; line-height: 25px; text-align: center; color: #6b6b6e; }
.register a { color: #8b5cf6; }
.side-widget { position: absolute; right: 0; top: 693px; width: 52px; height: 60px; border-radius: 11px 0 0 11px; border-right: 2px solid #666; background: #403b38; fill: #e9f50e; display: flex; align-items: center; padding-left: 6px; box-shadow: 0 5px 12px rgba(0, 0, 0, .15); }
.toast { position: absolute; left: 1396px; top: 775px; width: 485px; height: 117px; padding: 0 31px; border-radius: 8px; background: #f5202e; color: #fff; display: flex; flex-direction: column; justify-content: center; gap: 5px; line-height: 25px; box-shadow: 0 10px 18px rgba(20, 30, 60, .14); }
.toast strong { font-weight: 600; }
.toast span { opacity: .9; }
.scrollbar { display: flex; flex-direction: column; align-items: center; justify-content: space-between; width: 19px; background: #fcfcfc; padding: 6px 0 4px; }
.thumb { width: 11px; height: 816px; margin-top: 48px; border-radius: 6px; background: #8b8b8b; }

.taskbar { display: flex; align-items: center; height: 60px; border-top: 1px solid #b1aaa7; background: linear-gradient(90deg, #dddbd7, #ecdad2 12%, #ebdad3 22%, #e3dbda 30%, #ecdad8 35%, #f0ded6 54%, #ead8d6 64%, #dddbd9 73%, #dcdbda 85%, #e7d8d4 94%, #e6dcd8); color: #1f1f1f; }
.widgets { display: flex; align-items: center; width: 328px; padding: 0 0 5px 24px; gap: 4px; }
.widgets svg { margin-bottom: 8px; }
.stock { display: flex; flex-direction: column; font-size: 15px; line-height: 20px; letter-spacing: -.6px; }
.down { color: #c42b1c; }
.search { display: flex; align-items: center; gap: 12px; width: 274px; height: 39px; margin-left: 17px; padding: 0 0 1px 13px; border: 1px solid #d5cbc7; border-radius: 20px; background: #f8f5f3; font-size: 17.500px; letter-spacing: -.350px; color: #5a5a5a; }
.apps { display: flex; margin-left: 3.500px; }
.app { position: relative; width: 55.060px; height: 58px; display: flex; align-items: center; justify-content: center; }
.app > svg { width: 30px; height: 30px; z-index: 1; }
.app.active::before { content: ""; position: absolute; left: 3px; top: 5px; width: 48px; height: 48px; border-radius: 5px; background: #f8efeb; border: 1px solid #e8dbd5; border-right: 4px solid #f2e3dc; }
.app > .badge { position: absolute; left: 28px; top: 7px; width: 21px; height: 21px; }
.app u { position: absolute; bottom: 4px; width: 8px; height: 4px; border-radius: 2px; background: #8a817d; }
.app.active u { width: 20px; background: #0078d4; }
.tray { display: flex; align-items: center; margin-left: auto; padding: 0 24px 2px 0; }
.tray span { width: 40px; display: flex; justify-content: center; }
.tray b { font-weight: 400; font-size: 15px; line-height: 20px; letter-spacing: -.4px; }
.lang, .clock { display: flex; flex-direction: column; margin-top: -2px; }
.lang { width: 54px; align-items: center; }
.status { display: flex; align-items: center; gap: 8px; margin-left: 10px; }
.clock { width: 98px; align-items: flex-end; white-space: nowrap; }
.tray .clock b { letter-spacing: -.060px; }
```
